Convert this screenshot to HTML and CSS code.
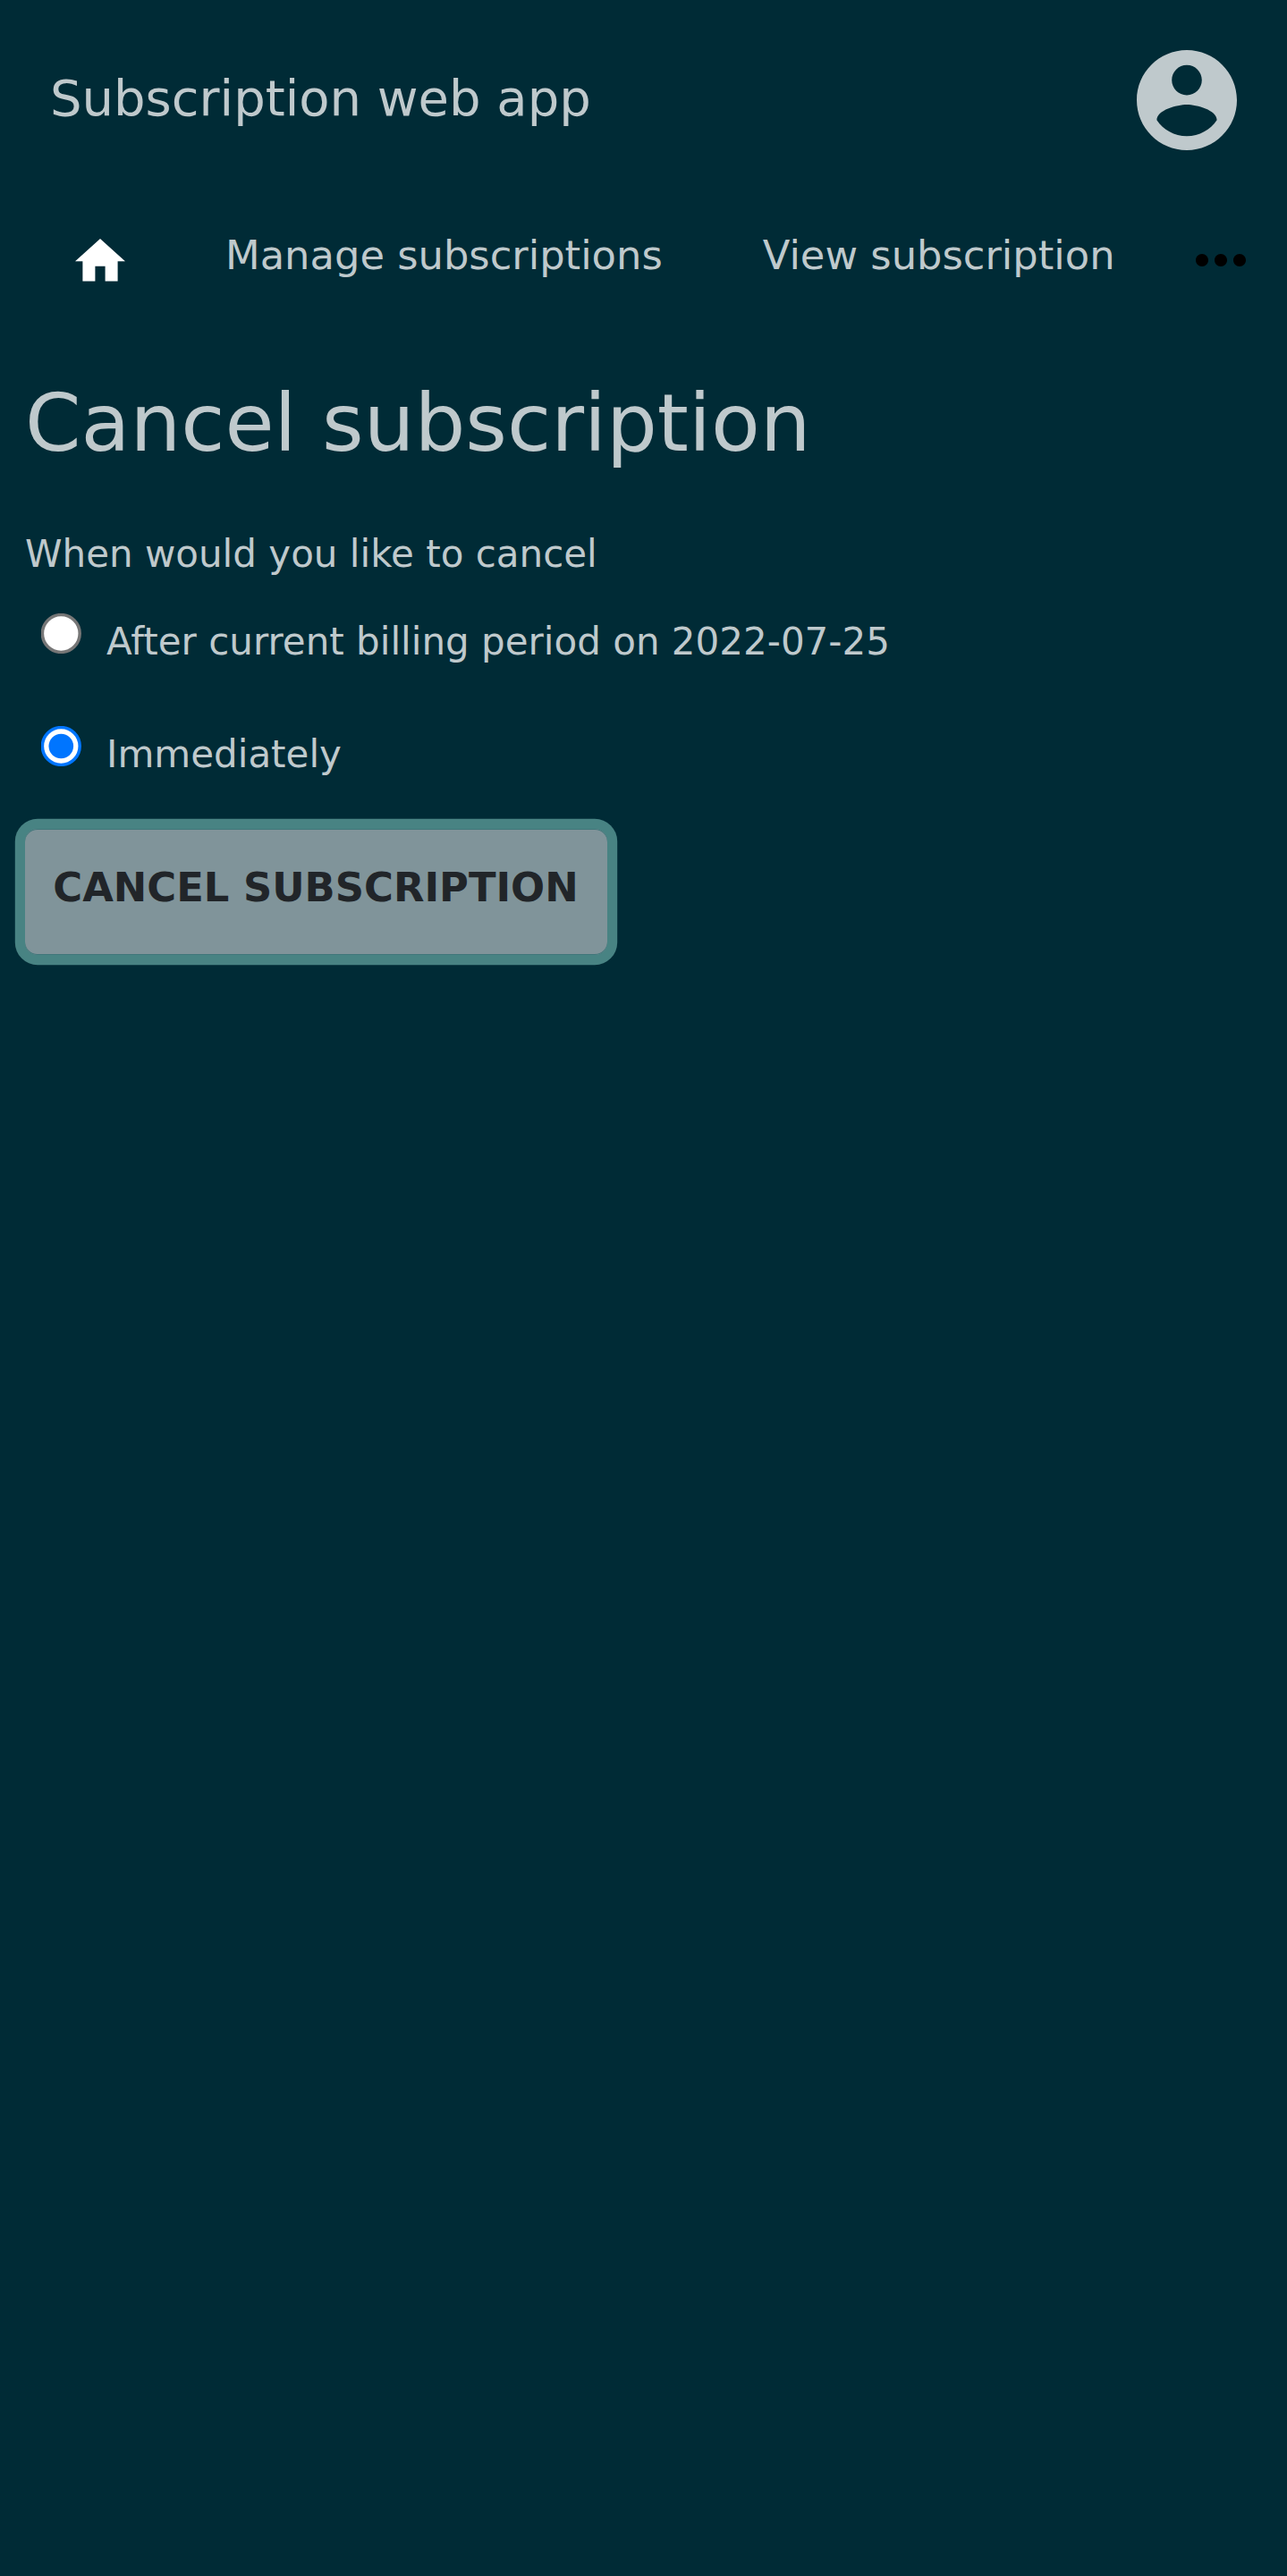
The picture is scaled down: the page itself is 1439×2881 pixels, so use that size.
FILE: index.html
```html
<!DOCTYPE html>
<html lang="en">
<head>
<meta charset="utf-8">
<title>Subscription web app</title>
<link rel="stylesheet" href="styles.css">
</head>
<body>
<header class="header">
  <span class="brand">Subscription web app</span>
  <svg class="avatar" viewBox="2 2 20 20"><path d="M12 2C6.48 2 2 6.48 2 12s4.48 10 10 10 10-4.48 10-10S17.52 2 12 2zm0 3c1.66 0 3 1.34 3 3s-1.34 3-3 3-3-1.34-3-3 1.34-3 3-3zm0 14.2c-2.5 0-4.71-1.28-6-3.22.03-1.99 4-3.08 6-3.08 1.99 0 5.97 1.09 6 3.08-1.29 1.94-3.5 3.22-6 3.22z"/></svg>
</header>
<nav class="nav">
  <svg class="home" viewBox="2 3 20 17"><path d="M10 20v-6h4v6h5v-8h3L12 3 2 12h3v8z"/></svg>
  <span class="link">Manage subscriptions</span>
  <span class="link">View subscription</span>
  <svg class="more" viewBox="4 10 16 4"><path d="M6 10c-1.1 0-2 .9-2 2s.9 2 2 2 2-.9 2-2-.9-2-2-2zm12 0c-1.1 0-2 .9-2 2s.9 2 2 2 2-.9 2-2-.9-2-2-2zm-6 0c-1.1 0-2 .9-2 2s.9 2 2 2 2-.9 2-2-.9-2-2-2z"/></svg>
</nav>
<main class="content">
  <h1 class="title">Cancel subscription</h1>
  <p class="question">When would you like to cancel</p>
  <label class="option"><svg class="radio" viewBox="0 0 45 45"><circle class="off" cx="22.3" cy="22.5" r="20.9"/></svg><span>After current billing period on 2022-07-25</span></label>
  <label class="option"><svg class="radio" viewBox="0 0 45 45"><circle class="on" cx="22.3" cy="22.5" r="20.9"/><circle class="dot" cx="22.3" cy="22.5" r="13.8"/></svg><span>Immediately</span></label>
  <button class="submit">CANCEL SUBSCRIPTION</button>
</main>
</body>
</html>
```
FILE: styles.css
```css
* { box-sizing: border-box; }
body {
  margin: 0;
  min-height: 2881px;
  background: #002b36;
  color: #bfc9cc;
  font-family: "DejaVu Sans", sans-serif;
  font-size: 42px;
  overflow-x: hidden;
}
svg { display: block; flex: none; }
.header {
  display: flex;
  justify-content: space-between;
  align-items: center;
  height: 224px;
  padding: 0 56px;
}
.brand { padding-bottom: 4px; font-size: 56px; line-height: 84px; }
.avatar { width: 112px; height: 112px; fill: #bfc9cc; }
.nav {
  display: flex;
  align-items: flex-start;
  height: 168px;
  padding: 28px 0 0 84px;
  font-size: 44.8px;
  line-height: 67px;
  white-space: nowrap;
}
.home { width: 56px; height: 47.6px; margin: 15px 0 0; fill: #fff; }
.link { margin-left: 112px; }
.more { width: 56px; height: 14px; margin: 31.5px 46px 0 auto; fill: #000; }
.content { padding: 27px 28px 0; }
.title {
  margin: 0;
  font-size: 89.6px;
  font-weight: 400;
  line-height: 108px;
}
.question { margin: 61px 0 0; line-height: 63px; }
.option {
  display: flex;
  align-items: flex-start;
  height: 63px;
  margin-top: 35px;
  padding-left: 18px;
  line-height: 63px;
}
.option + .option { margin-top: 63px; }
.radio { width: 45px; height: 45px; margin-right: 28px; }
.off { fill: #fff; stroke: #767676; stroke-width: 3.5; }
.on { fill: #fff; stroke: #0075ff; stroke-width: 3.5; }
.dot { fill: #0075ff; }
.submit {
  display: block;
  width: 651px;
  height: 141px;
  margin: 52px 0 0;
  padding: 0 1px 11px 0;
  border: 0;
  border-radius: 14px;
  background: #80949a;
  box-shadow: 0 0 0 11.2px #488383, inset 0 1px #40767a, inset 0 -1px #40767a;
  color: #212529;
  font: 700 44.8px/67px "DejaVu Sans", sans-serif;
}
```
